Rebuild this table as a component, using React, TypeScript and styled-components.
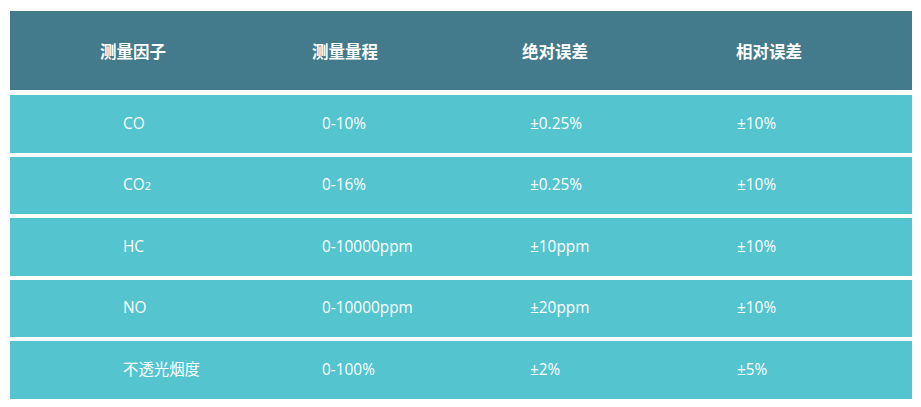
import type { ReactNode } from "react";
import styled, { createGlobalStyle } from "styled-components";

const GlobalStyle = createGlobalStyle`
  body {
    margin: 0;
    background: #ffffff;
    font-family: "Open Sans", "Noto Sans CJK SC", sans-serif;
  }
`;

const Wrapper = styled.div`
  padding: 11px 9px 0 10px;
`;

const Table = styled.div`
  width: 902px;
  display: flex;
  flex-direction: column;
  gap: 4px;
`;

const HeadRow = styled.div<{ $template: string }>`
  display: grid;
  grid-template-columns: ${(props) => props.$template};
  height: 79px;
  margin-bottom: 1px;
  background: #437b8c;
  align-items: center;
`;

const HeadCell = styled.div<{ $indent: number }>`
  padding-left: ${(props) => props.$indent}px;
  color: #ffffff;
  font-family: "Noto Sans CJK SC", sans-serif;
  font-weight: 700;
  font-size: 16.5px;
  line-height: 20px;
`;

const BodyRow = styled.div<{ $template: string }>`
  display: grid;
  grid-template-columns: ${(props) => props.$template};
  height: 57.5px;
  background: #54c4cf;
  align-items: center;
`;

const BodyCell = styled.div<{ $indent: number }>`
  padding-left: ${(props) => props.$indent}px;
  color: #ffffff;
  font-size: 15.4px;
  line-height: 20px;
  white-space: nowrap;
`;

const Sub = styled.span`
  font-size: 11px;
`;

interface IColumn {
  title: string;
  headIndent: number;
  bodyIndent: number;
  width: number;
}

const columns: IColumn[] = [
  { title: "测量因子", headIndent: 90, bodyIndent: 113, width: 205 },
  { title: "测量量程", headIndent: 97, bodyIndent: 107, width: 208 },
  { title: "绝对误差", headIndent: 99, bodyIndent: 107, width: 207 },
  { title: "相对误差", headIndent: 106, bodyIndent: 107, width: 282 },
];

const rows: ReactNode[][] = [
  ["CO", "0-10%", "±0.25%", "±10%"],
  [
    <>
      CO<Sub>2</Sub>
    </>,
    "0-16%",
    "±0.25%",
    "±10%",
  ],
  ["HC", "0-10000ppm", "±10ppm", "±10%"],
  ["NO", "0-10000ppm", "±20ppm", "±10%"],
  ["不透光烟度", "0-100%", "±2%", "±5%"],
];

export default function App() {
  const template = columns.map((c) => `${c.width}px`).join(" ");

  return (
    <>
      <GlobalStyle />
      <Wrapper>
        <Table>
          <HeadRow $template={template}>
            {columns.map((c) => (
              <HeadCell key={c.title} $indent={c.headIndent}>
                {c.title}
              </HeadCell>
            ))}
          </HeadRow>
          {rows.map((row, i) => (
            <BodyRow key={i} $template={template}>
              {row.map((cell, j) => (
                <BodyCell key={j} $indent={columns[j].bodyIndent}>
                  {cell}
                </BodyCell>
              ))}
            </BodyRow>
          ))}
        </Table>
      </Wrapper>
    </>
  );
}
